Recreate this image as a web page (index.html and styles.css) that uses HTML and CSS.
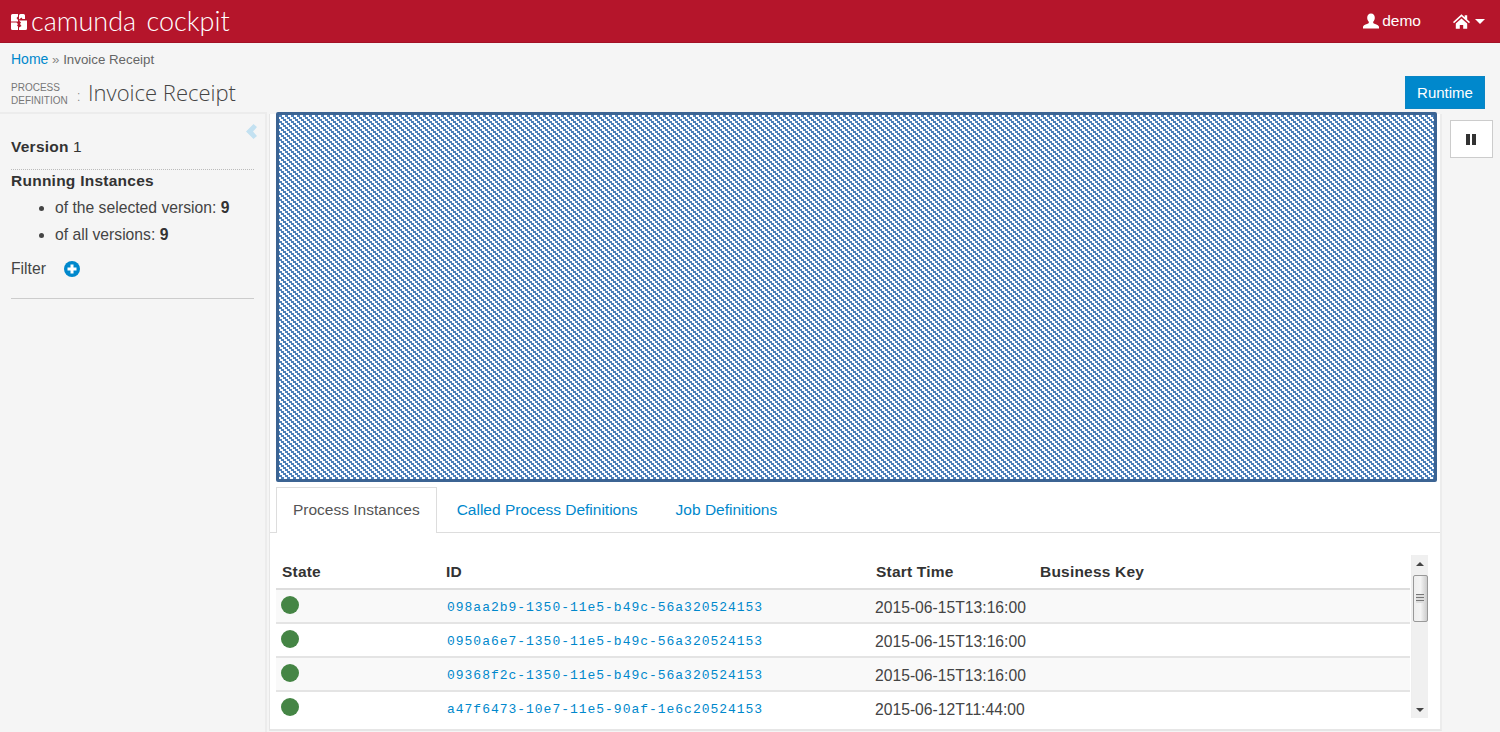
FILE: index.html

```html
<!DOCTYPE html>
<html lang="en">
<head>
  <meta charset="UTF-8" />
  <title>camunda cockpit</title>
  <link rel="stylesheet" href="styles.css">
</head>
<body>
  <header class="topbar">
    <a class="brand">
      <svg class="brand-icon" viewBox="0 0 16 16" width="16" height="16">
        <path fill="#fff" d="M0 1.500a1.500 1.500 0 0 1 1.500-1.500H7v2.500L5.500 4 7 6v1.500H0z"/>
        <path fill="#fff" d="M8 1.500A1.500 1.500 0 0 1 9.500 0h3a1.500 1.500 0 0 1 1.500 1.500V5h-2.500L10.500 3.500 8 5.500z"/>
        <path fill="#fff" d="M0 8.500h5.500L7 10l-1 1.500 1 1V16H1.500A1.500 1.500 0 0 1 0 14.500z"/>
        <path fill="#fff" d="M8 6.500h8v8a1.500 1.500 0 0 1-1.500 1.500H8v-2.500L10.500 12 9 10l1-1.500z"/>
      </svg>
      <span class="brand-name">camunda cockpit</span>
    </a>
    <nav class="topnav">
      <span class="topnav-item">
        <svg viewBox="0 0 16 16" width="16" height="16"><path fill="#fff" d="M8 0.500c2.400 0 3.800 1.800 3.800 4.200 0 1.700-.7 3.100-1.600 4v1.300c0 .7 5.300 1.400 5.800 3.800v1.700H0V13.800c.5-2.400 5.800-3.100 5.800-3.800V8.700C4.900 7.800 4.200 6.400 4.200 4.700 4.200 2.300 5.600.5 8 .5z"/></svg>
        demo
      </span>
      <span class="topnav-item home">
        <svg viewBox="0 0 17 15" width="17" height="15"><path fill="#fff" d="M8.500.3l3.200 2.900V1.300h2.500v4.200l2.800 2.500-1 1.200-7.500-6.700L1 9.200 0 8zM2.800 9.400l5.700-5 5.700 5v5.400h-4v-3.800H6.800v3.800h-4z"/></svg>
        <i class="caret"></i>
      </span>
    </nav>
  </header>

  <div class="crumbs"><a>Home</a> <span class="sep">»</span> Invoice Receipt</div>

  <div class="page-head">
    <div class="page-label">PROCESS<br>DEFINITION</div>
    <h1><span class="colon">:</span> Invoice Receipt</h1>
    <button class="btn-runtime">Runtime</button>
  </div>

  <div class="layout">
    <aside class="sidebar">
      <svg class="collapse" viewBox="0 0 11 15" width="11" height="15"><path fill="#c3e1f1" d="M7.500 0L11 3l-4 4.500 4 4.500-3.500 3L0 7.500z"/></svg>
      <div class="version"><b>Version</b> 1</div>
      <div class="running">
        <b>Running Instances</b>
        <ul>
          <li>of the selected version: <strong>9</strong></li>
          <li>of all versions: <strong>9</strong></li>
        </ul>
      </div>
      <div class="filter">
        Filter
        <svg viewBox="0 0 16 16" width="16" height="16"><circle cx="8" cy="8" r="8" fill="#0088cc"/><path fill="#fff" d="M6.500 3.500h3v3h3v3h-3v3h-3v-3h-3v-3h3z"/></svg>
      </div>
    </aside>

    <main class="main">
      <div class="diagram">
        <svg width="100%" height="100%" shape-rendering="crispEdges">
          <defs>
            <pattern id="stripes" width="6" height="6" patternUnits="userSpaceOnUse">
              <rect width="6" height="6" fill="#fff"/>
              <rect x="0" y="0" width="3" height="2" fill="#4b7fb9"/>
              <rect x="2" y="2" width="3" height="2" fill="#4b7fb9"/>
              <rect x="4" y="4" width="2" height="2" fill="#4b7fb9"/>
              <rect x="0" y="4" width="1" height="2" fill="#4b7fb9"/>
            </pattern>
          </defs>
          <rect width="100%" height="100%" fill="url(#stripes)"/>
        </svg>
      </div>
      <ul class="tabs">
        <li class="active">Process Instances</li>
        <li>Called Process Definitions</li>
        <li>Job Definitions</li>
      </ul>
      <div class="tab-pane">
        <div class="table-wrap">
          <table>
            <colgroup><col class="c-state"><col class="c-id"><col class="c-time"><col></colgroup>
            <thead>
              <tr><th>State</th><th>ID</th><th>Start Time</th><th>Business Key</th></tr>
            </thead>
            <tbody>
              <tr><td><i class="dot"></i></td><td class="id">098aa2b9-1350-11e5-b49c-56a320524153</td><td>2015-06-15T13:16:00</td><td></td></tr>
              <tr><td><i class="dot"></i></td><td class="id">0950a6e7-1350-11e5-b49c-56a320524153</td><td>2015-06-15T13:16:00</td><td></td></tr>
              <tr><td><i class="dot"></i></td><td class="id">09368f2c-1350-11e5-b49c-56a320524153</td><td>2015-06-15T13:16:00</td><td></td></tr>
              <tr><td><i class="dot"></i></td><td class="id">a47f6473-10e7-11e5-90af-1e6c20524153</td><td>2015-06-12T11:44:00</td><td></td></tr>
            </tbody>
          </table>
          <div class="scrollbar">
            <i class="arrow up"></i>
            <div class="thumb"><span></span></div>
            <i class="arrow down"></i>
          </div>
        </div>
      </div>
    </main>

    <div class="side-right">
      <button class="btn-pause"><i></i><i></i></button>
    </div>
  </div>
</body>
</html>
```

FILE: styles.css

```css
html, body { margin: 0; height: 732px; overflow: hidden; }
body { font-family: "Liberation Sans", Arial, sans-serif; font-size: 15.5px; color: #444; background: #f5f5f5; display: flex; flex-direction: column; }

.topbar { height: 42px; background: #b5152b; border-bottom: 1px solid #a21226; display: flex; justify-content: space-between; align-items: center; color: #fff; flex: none; }
.brand { display: flex; align-items: center; padding-left: 11px; }
.brand-icon { margin-right: 4px; margin-top: 2px; }
.brand-name { font-family: Lato, sans-serif; font-weight: 300; font-size: 27px; line-height: 42px; word-spacing: 3px; }
.topnav { display: flex; align-items: center; padding-right: 15px; }
.topnav-item { display: flex; align-items: center; gap: 3px; }
.topnav-item.home { gap: 4px; margin-left: 32px; }
.caret { display: inline-block; border: 5px solid transparent; border-top-color: #fff; border-bottom: 0; margin-left: 1px; }

.crumbs { font-size: 13.3px; color: #666; padding: 9px 11px 0; height: 23px; flex: none; line-height: 15px; }
.crumbs a { color: #0088cc; font-size: 14px; }
.crumbs .sep { color: #888; }

.page-head { display: flex; align-items: center; height: 39px; padding: 0 15px 0 11px; flex: none; box-sizing: border-box; }
.page-label { font-size: 10px; line-height: 13px; color: #777; width: 66px; margin-top: -1px; }
.page-head h1 { margin: -6px 0 0; font-family: "Open Sans", sans-serif; font-weight: 300; font-size: 22px; color: #444; flex: 1; }
.colon { font-size: 14px; color: #777; margin-right: 2px; }
.btn-runtime { width: 80px; height: 33px; background: #0088cc; border: 1px solid #0a85c4; color: #fff; font: 15px "Liberation Sans", Arial, sans-serif; padding: 0; margin-top: -5px; }

.layout { flex: 1; display: flex; min-height: 0; }

.sidebar { width: 267px; box-sizing: border-box; border-top: 2px solid #ececec; border-right: 2px solid #ececec; padding: 24px 11px 0 11px; flex: none; position: relative; margin-top: -2px; }
.collapse { position: absolute; top: 10px; right: 8px; }
.version { height: 31px; border-bottom: 1px dotted #bbb; font-size: 15.5px; color: #333; line-height: 18px; }
.version b, .running b { font-weight: 700; letter-spacing: 0.25px; }
.running { padding-top: 2px; font-size: 15.5px; color: #333; line-height: 18px; }
.running ul { margin: 0; padding: 0 0 0 44px; font-size: 15.7px; color: #444; }
.running li { line-height: 20px; margin-top: 7px; }
.running li:first-child { margin-top: 8px; }
.running strong { color: #333; }
.filter { display: flex; align-items: center; gap: 18px; height: 34px; padding-bottom: 12px; margin-top: 7px; border-bottom: 1px solid #ccc; font-size: 15.7px; color: #444; }

.main { width: 1173px; flex: none; background: #fff; border-left: 1px solid #e6e6e6; border-right: 2px solid #ececec; border-bottom: 2px solid #e6e6e6; box-sizing: border-box; margin: 0 0 1px 2px; display: flex; flex-direction: column; }
.diagram { height: 364px; margin: -2px 3px 0 6px; border: 3px solid #3c6493; border-radius: 2px; flex: none; }
.diagram svg { display: block; }

.tabs { list-style: none; margin: 5px 0 0; padding: 0 0 0 6px; display: flex; height: 45px; border-bottom: 1px solid #ddd; flex: none; background: #fff; }
.tabs li { padding: 0 18px; line-height: 44px; color: #0088cc; margin-bottom: -1px; border: 1px solid transparent; border-bottom: 0; height: 45px; }
.tabs li.active { color: #555; background: #fff; border-color: #ddd; height: 46px; box-sizing: border-box; padding: 0 16px; margin-right: 1px; }

.tab-pane { padding: 22px 11px 0 6px; flex: none; }
.table-wrap { display: flex; height: 163px; overflow: hidden; }
table { border-collapse: collapse; table-layout: fixed; width: 1134px; flex: none; align-self: flex-start; }
.c-state { width: 164px; }
.c-id { width: 430px; }
.c-time { width: 164px; }
th { text-align: left; font-weight: 700; font-size: 15.5px; letter-spacing: 0.2px; color: #333; height: 34px; padding: 0 6px; border-bottom: 2px solid #ddd; box-sizing: border-box; }
td { height: 34px; padding: 3px 5px 0; border-bottom: 2px solid #e4e4e4; box-sizing: border-box; color: #444; font-size: 15.7px; }
tbody tr:nth-child(odd) td { background: #f9f9f9; }
td.id { font-family: "Liberation Mono", monospace; font-size: 13px; letter-spacing: 0.98px; color: #0088cc; padding: 2px 5px 0 7px; }
.dot { display: block; width: 18px; height: 18px; border-radius: 50%; background: #458545; margin: -5px 0 0 0; }

.scrollbar { width: 17px; margin-left: 1px; background: #f0f0f0; display: flex; flex-direction: column; align-items: center; flex: none; border-left: 1px solid #eee; box-sizing: border-box; }
.arrow { border: 4px solid transparent; flex: none; }
.arrow.up { border-bottom-color: #444; border-top: 0; margin: 7px 0 9px; }
.arrow.down { border-top-color: #444; border-bottom: 0; margin: auto 0 6px; }
.thumb { width: 15px; height: 47px; box-sizing: border-box; border: 1px solid #999; border-radius: 2px; background: linear-gradient(90deg, #eee, #f4f4f4 50%, #ccc); display: flex; align-items: center; justify-content: center; flex: none; }
.thumb span { width: 8px; height: 9px; background: repeating-linear-gradient(180deg, #777 0, #777 1px, #ddd 1px, #ddd 3px); }

.side-right { flex: 1; }
.btn-pause { display: flex; justify-content: center; align-items: center; gap: 2px; width: 43px; height: 38px; margin: 6px 0 0 8px; background: #fff; border: 1px solid #ccc; padding: 0 2px 0 0; }
.btn-pause i { display: block; width: 4px; height: 11px; background: #333; }
```
